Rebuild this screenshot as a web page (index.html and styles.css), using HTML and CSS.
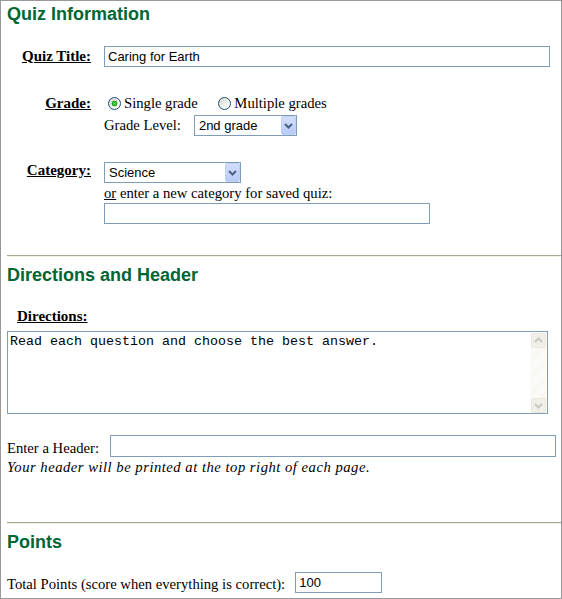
FILE: index.html
```html
<!DOCTYPE html>
<html lang="en">
<head>
    <meta charset="UTF-8">
    <meta name="viewport" content="width=device-width, initial-scale=1.0">
    <title>Quiz Information</title>
    <link rel="stylesheet" href="styles.css">
</head>
<body>
    <div class="panel">
        <!-- quiz information -->
        <h2 class="section-title">Quiz Information</h2>

        <div class="field-row row-title">
            <label class="field-label" for="quizTitle">Quiz Title:</label>
            <div class="field-control">
                <input type="text" class="text-box title-box" id="quizTitle" value="Caring for Earth">
            </div>
        </div>

        <div class="field-row row-grade">
            <span class="field-label">Grade:</span>
            <div class="field-control">
                <div class="radio-line">
                    <label class="radio-opt"><input type="radio" class="radio" name="grade" checked>Single grade</label>
                    <label class="radio-opt"><input type="radio" class="radio" name="grade">Multiple grades</label>
                </div>
                <div class="level-line">
                    <span>Grade Level:</span>
                    <span class="combo level-combo">
                        <select class="combo-select">
                            <option>2nd grade</option>
                        </select>
                        <span class="combo-btn">
                            <svg width="15" height="19" viewBox="0 0 15 19"><polyline points="4,8 7.5,11.5 11,8" fill="none" stroke="#4d6185" stroke-width="2"/></svg>
                        </span>
                    </span>
                </div>
            </div>
        </div>

        <div class="field-row row-category">
            <label class="field-label" for="category">Category:</label>
            <div class="field-control">
                <span class="combo category-combo">
                    <select class="combo-select" id="category">
                        <option>Science</option>
                    </select>
                    <span class="combo-btn">
                        <svg width="15" height="19" viewBox="0 0 15 19"><polyline points="4,8 7.5,11.5 11,8" fill="none" stroke="#4d6185" stroke-width="2"/></svg>
                    </span>
                </span>
                <div class="hint-line"><u>or</u> enter a new category for saved quiz:</div>
                <input type="text" class="text-box category-box">
            </div>
        </div>

        <hr class="divider">

        <!-- directions and header -->
        <h2 class="section-title">Directions and Header</h2>
        <div class="field-label directions-label">Directions:</div>
        <div class="memo">
            <textarea class="memo-text">Read each question and choose the best answer.</textarea>
            <div class="scroll">
                <span class="scroll-btn">
                    <svg width="15" height="15" viewBox="0 0 15 15"><polyline points="4,9 7.5,5.5 11,9" fill="none" stroke="#cbc9bf" stroke-width="2"/></svg>
                </span>
                <span class="scroll-track"></span>
                <span class="scroll-btn">
                    <svg width="15" height="15" viewBox="0 0 15 15"><polyline points="4,6 7.5,9.5 11,6" fill="none" stroke="#cbc9bf" stroke-width="2"/></svg>
                </span>
            </div>
        </div>

        <div class="inline-row header-row">
            <span>Enter a Header:</span>
            <input type="text" class="text-box header-box">
        </div>
        <div class="note">Your header will be printed at the top right of each page.</div>

        <hr class="divider points-divider">

        <!-- points -->
        <h2 class="section-title">Points</h2>
        <div class="inline-row points-row">
            <span>Total Points (score when everything is correct):</span>
            <input type="text" class="text-box points-box" value="100">
        </div>
    </div>
</body>
</html>
```

FILE: styles.css
```css
/* page and frame */
body {
    margin: 0;
    font-family: "Liberation Serif", "Times New Roman", serif;
    font-size: 14.67px;
    color: #000;
    background: #fff;
}
.panel {
    height: 599px;
    box-sizing: border-box;
    border: 1px solid #999;
    padding: 0 5px 0 6px;
    overflow: hidden;
}
/* green section headings */
.section-title {
    margin: 3px 0 0;
    font-family: "Liberation Sans", Arial, sans-serif;
    font-size: 18px;
    line-height: 21px;
    font-weight: bold;
    color: #006633;
}
.divider {
    height: 0;
    margin: 31px -5px 0 0;
    border: 0;
    border-top: 1px solid #aca899;
    border-bottom: 1px solid #f1efe2;
}
.divider + .section-title { margin-top: 8px; }
.points-divider { margin-top: 46px; }

/* label column + control column */
.field-row {
    display: grid;
    grid-template-columns: 84px 1fr;
    column-gap: 13px;
    align-items: baseline;
}
.field-label {
    font-size: 15px;
    font-weight: bold;
    text-decoration: underline;
    text-align: right;
}
.row-title { margin-top: 21px; }
.row-grade { margin-top: 26px; }
.row-category { margin-top: 26px; }

/* text inputs */
.text-box {
    display: block;
    height: 21px;
    box-sizing: border-box;
    margin: 0;
    padding: 1px 3px;
    border: 1px solid #7f9db9;
    font-family: "Liberation Sans", Arial, sans-serif;
    font-size: 13px;
    color: #000;
    background: #fff;
    outline: none;
}
.title-box { width: 446px; }
.category-box { width: 326px; margin-top: 1px; }
.header-box { flex: 1; height: 22px; }
.points-box { width: 87px; }

/* radios */
.radio-line { line-height: 20px; height: 20px; white-space: nowrap; }
.radio-opt { margin-right: 13px; }
.radio {
    appearance: none;
    -webkit-appearance: none;
    width: 13px;
    height: 13px;
    margin: 0 3px 0 4px;
    box-sizing: border-box;
    border: 1px solid #1c5180;
    border-radius: 50%;
    vertical-align: middle;
    position: relative;
    top: -1px;
    background: linear-gradient(135deg, #d2d2ca, #f4f4f0 60%, #fff);
}
.radio:checked {
    background:
        radial-gradient(circle, #5fe35f 0, #2fbb2f 1.5px, #1f9a1f 2.6px, transparent 3.2px),
        linear-gradient(135deg, #d2d2ca, #f4f4f0 60%, #fff);
}

/* combo boxes */
.level-line {
    display: flex;
    align-items: center;
    gap: 13px;
    height: 21px;
    margin-top: 2px;
    line-height: 17px;
}
.combo {
    display: inline-flex;
    height: 21px;
    box-sizing: border-box;
    border: 1px solid #7f9db9;
    background: #fff;
    vertical-align: top;
}
.level-combo { width: 103px; }
.category-combo { width: 137px; }
.combo-select {
    flex: 1;
    min-width: 0;
    appearance: none;
    -webkit-appearance: none;
    border: 0;
    margin: 0;
    padding: 0 0 0 4px;
    background: transparent;
    font-family: "Liberation Sans", Arial, sans-serif;
    font-size: 13px;
    color: #000;
    outline: none;
}
.combo-btn {
    width: 15px;
    height: 19px;
    box-sizing: border-box;
    border: 1px solid #bfd0f5;
    border-radius: 2px;
    background: linear-gradient(#d3defb, #b8cbf7);
}
.combo-btn svg { display: block; margin: -1px; }
.hint-line { margin-top: 2px; line-height: 17px; }

/* directions box */
.directions-label {
    margin-top: 22px;
    padding-left: 10px;
    text-align: left;
    line-height: 17px;
}
.memo {
    display: flex;
    width: 541px;
    height: 83px;
    box-sizing: border-box;
    margin-top: 6px;
    border: 1px solid #7f9db9;
}
.memo-text {
    flex: 1;
    margin: 0;
    padding: 2px;
    border: 0;
    resize: none;
    overflow: hidden;
    font-family: "Liberation Mono", "Courier New", monospace;
    font-size: 13.33px;
    color: #000;
    outline: none;
}
.scroll {
    display: flex;
    flex-direction: column;
    width: 17px;
    padding: 1px 1px 0;
    box-sizing: border-box;
    background: #fdfdfb;
}
.scroll-btn {
    width: 15px;
    height: 15px;
    box-sizing: border-box;
    border: 1px solid #ebe9df;
    border-radius: 2px;
    background: #f0efe8;
}
.scroll-btn svg { display: block; margin: -1px; }
.scroll-track {
    flex: 1;
    background: repeating-linear-gradient(135deg, #fdfdfb 0 1px, #f6f5f0 1px 2px);
}

/* single line label + input */
.inline-row {
    display: flex;
    align-items: flex-end;
    line-height: 17px;
    white-space: nowrap;
}
.header-row { margin-top: 21px; gap: 11px; }
.points-row { margin-top: 19px; gap: 10px; }
.note {
    margin-top: 2px;
    line-height: 17px;
    font-style: italic;
    letter-spacing: 0.5px;
}
```
